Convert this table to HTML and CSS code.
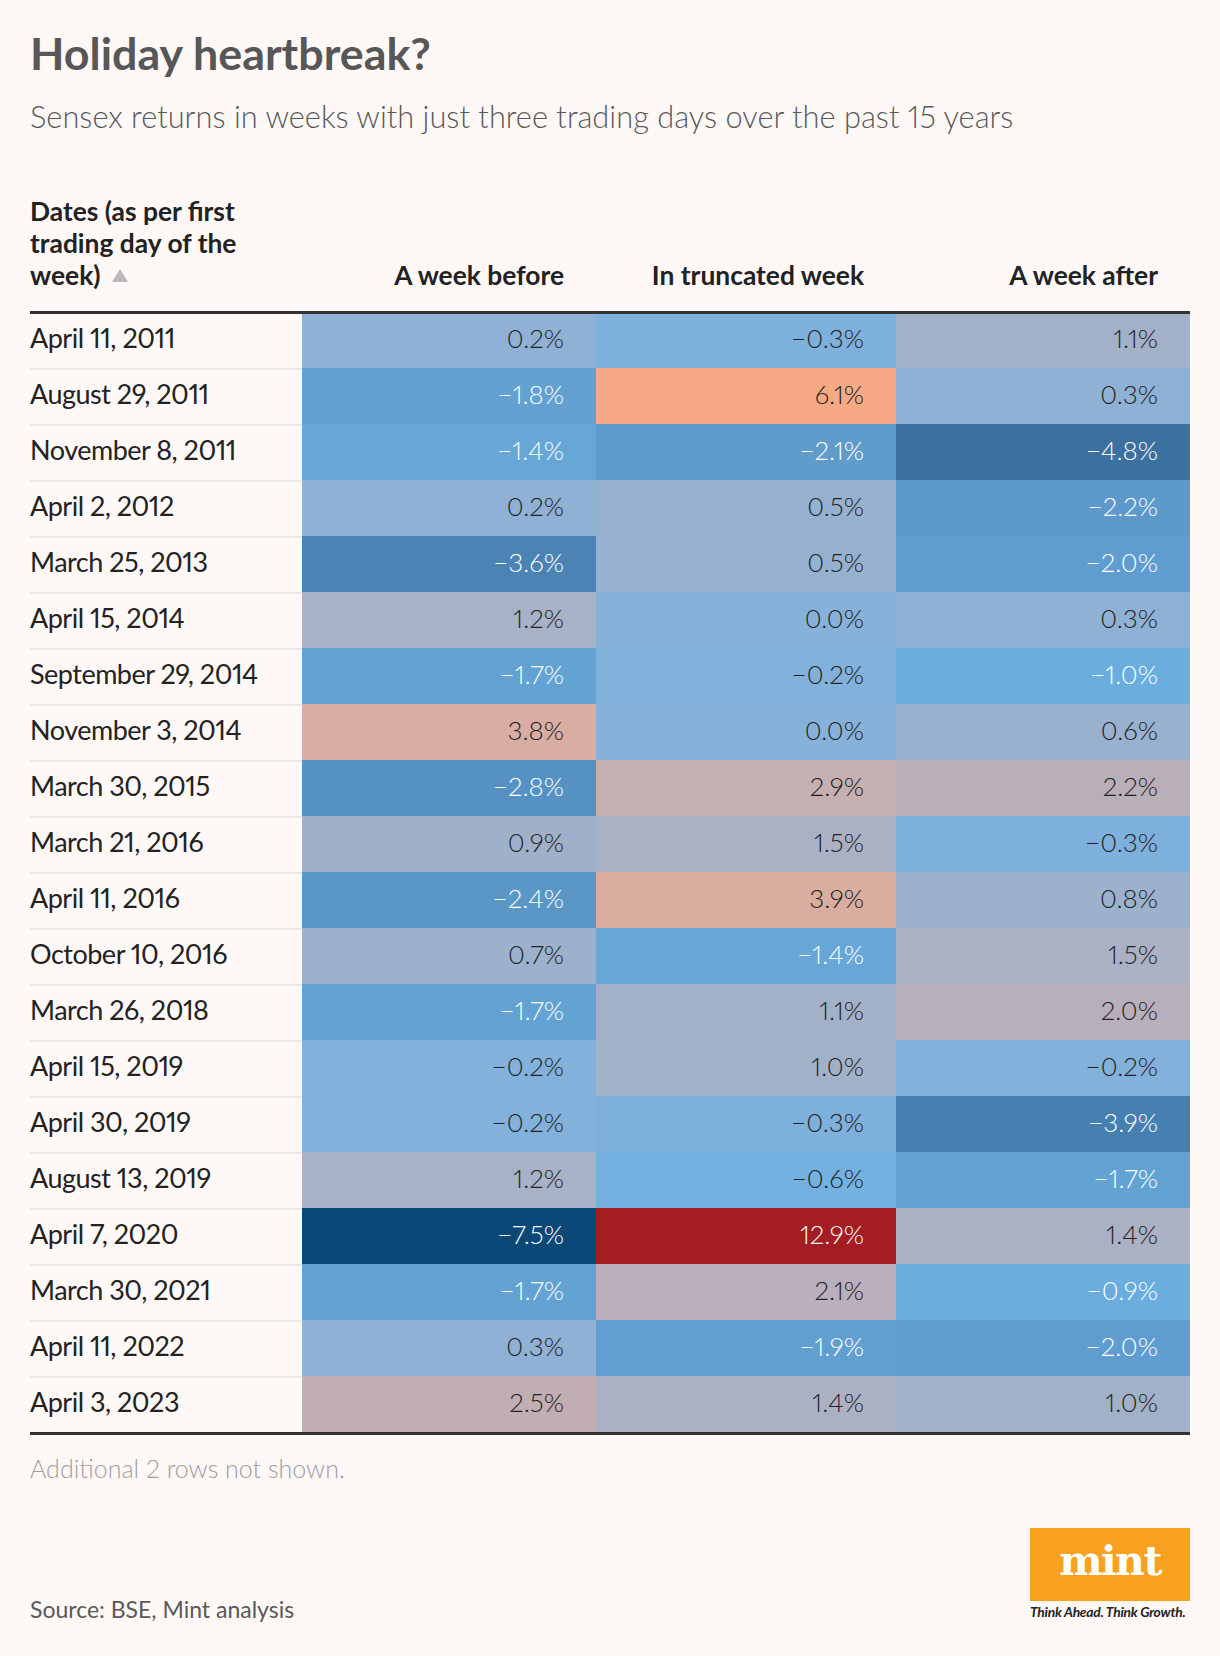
FILE: index.html
```html
<!DOCTYPE html>
<html lang="en">
<head>
<meta charset="utf-8">
<title>Holiday heartbreak?</title>
<link rel="stylesheet" href="styles.css">
</head>
<body>
<div class="page">
  <h1 class="title">Holiday heartbreak?</h1>
  <p class="subtitle">Sensex returns in weeks with just three trading days over the past 15 years</p>

  <div class="table">
    <div class="thead">
      <div class="th th-date">Dates (as per first<br>trading day of the<br>week)<svg class="sort" width="16" height="13" viewBox="0 0 16 13"><path d="M8 0 L16 13 L0 13 Z"/></svg></div>
      <div class="th th-num">A week before</div>
      <div class="th th-num">In truncated week</div>
      <div class="th th-num">A week after</div>
    </div>
    <div class="tbody">
      <div class="row"><div class="date">April 11, 2011</div><div class="cell" style="background:#8fb1d6">0.2%</div><div class="cell" style="background:#7db0dc">−0.3%</div><div class="cell" style="background:#a2b1c8">1.1%</div></div>
      <div class="row"><div class="date">August 29, 2011</div><div class="cell inv" style="background:#62a1d1">−1.8%</div><div class="cell" style="background:#f7a985">6.1%</div><div class="cell" style="background:#8fb1d6">0.3%</div></div>
      <div class="row"><div class="date">November 8, 2011</div><div class="cell inv" style="background:#67a7d8">−1.4%</div><div class="cell inv" style="background:#5f9ccc">−2.1%</div><div class="cell inv" style="background:#3a71a1">−4.8%</div></div>
      <div class="row"><div class="date">April 2, 2012</div><div class="cell" style="background:#8fb1d6">0.2%</div><div class="cell" style="background:#96b1cf">0.5%</div><div class="cell inv" style="background:#5d99ca">−2.2%</div></div>
      <div class="row"><div class="date">March 25, 2013</div><div class="cell inv" style="background:#4a83b4">−3.6%</div><div class="cell" style="background:#96b1cf">0.5%</div><div class="cell inv" style="background:#5f9ccf">−2.0%</div></div>
      <div class="row"><div class="date">April 15, 2014</div><div class="cell" style="background:#a7b1c8">1.2%</div><div class="cell" style="background:#86b1d9">0.0%</div><div class="cell" style="background:#8fb1d6">0.3%</div></div>
      <div class="row"><div class="date">September 29, 2014</div><div class="cell inv" style="background:#63a3d3">−1.7%</div><div class="cell" style="background:#82b1db">−0.2%</div><div class="cell inv" style="background:#6aaee0">−1.0%</div></div>
      <div class="row"><div class="date">November 3, 2014</div><div class="cell" style="background:#d8ada2">3.8%</div><div class="cell" style="background:#86b1d9">0.0%</div><div class="cell" style="background:#97b1cf">0.6%</div></div>
      <div class="row"><div class="date">March 30, 2015</div><div class="cell inv" style="background:#5592c3">−2.8%</div><div class="cell" style="background:#c6afb0">2.9%</div><div class="cell" style="background:#b9afb9">2.2%</div></div>
      <div class="row"><div class="date">March 21, 2016</div><div class="cell" style="background:#9fb1ca">0.9%</div><div class="cell" style="background:#aab1c5">1.5%</div><div class="cell" style="background:#7db0dc">−0.3%</div></div>
      <div class="row"><div class="date">April 11, 2016</div><div class="cell inv" style="background:#5a97c7">−2.4%</div><div class="cell" style="background:#d9ada0">3.9%</div><div class="cell" style="background:#9cb1cc">0.8%</div></div>
      <div class="row"><div class="date">October 10, 2016</div><div class="cell" style="background:#9cb1cc">0.7%</div><div class="cell inv" style="background:#67a7d8">−1.4%</div><div class="cell" style="background:#aab1c5">1.5%</div></div>
      <div class="row"><div class="date">March 26, 2018</div><div class="cell inv" style="background:#63a3d3">−1.7%</div><div class="cell" style="background:#a2b1c8">1.1%</div><div class="cell" style="background:#b7afbc">2.0%</div></div>
      <div class="row"><div class="date">April 15, 2019</div><div class="cell" style="background:#82b1db">−0.2%</div><div class="cell" style="background:#a1b1c8">1.0%</div><div class="cell" style="background:#82b1db">−0.2%</div></div>
      <div class="row"><div class="date">April 30, 2019</div><div class="cell" style="background:#82b1db">−0.2%</div><div class="cell" style="background:#7db0dc">−0.3%</div><div class="cell inv" style="background:#4580b0">−3.9%</div></div>
      <div class="row"><div class="date">August 13, 2019</div><div class="cell" style="background:#a7b1c8">1.2%</div><div class="cell" style="background:#73b1e1">−0.6%</div><div class="cell inv" style="background:#63a3d3">−1.7%</div></div>
      <div class="row"><div class="date">April 7, 2020</div><div class="cell inv" style="background:#0b4877">−7.5%</div><div class="cell inv" style="background:#a41d22">12.9%</div><div class="cell" style="background:#aab1c5">1.4%</div></div>
      <div class="row"><div class="date">March 30, 2021</div><div class="cell inv" style="background:#63a3d3">−1.7%</div><div class="cell" style="background:#bab0bd">2.1%</div><div class="cell inv" style="background:#6aaee0">−0.9%</div></div>
      <div class="row"><div class="date">April 11, 2022</div><div class="cell" style="background:#8fb1d6">0.3%</div><div class="cell inv" style="background:#609fd0">−1.9%</div><div class="cell inv" style="background:#5f9ccf">−2.0%</div></div>
      <div class="row"><div class="date">April 3, 2023</div><div class="cell" style="background:#c0aeb4">2.5%</div><div class="cell" style="background:#aab1c5">1.4%</div><div class="cell" style="background:#a1b1c8">1.0%</div></div>
    </div>
  </div>

  <p class="note">Additional 2 rows not shown.</p>

  <footer class="footer">
    <span class="source">Source: BSE, Mint analysis</span>
    <div class="logo">
      <div class="logo-box">mint</div>
      <div class="tagline">Think Ahead. Think Growth.</div>
    </div>
  </footer>
</div>
</body>
</html>
```
FILE: styles.css
```css
html, body {
  margin: 0;
  padding: 0;
  background: #fef8f7;
}

body {
  font-family: Lato, "Noto Sans", sans-serif;
  color: #222;
  font-variant-numeric: proportional-nums;
}

.page {
  padding: 27px 30px 0;
  height: 1656px;
  box-sizing: border-box;
}

.title {
  margin: 0;
  font-size: 44.8px;
  line-height: 53px;
  font-weight: 700;
  color: #575757;
}

.subtitle {
  margin: 19px 0 0;
  font-size: 30.8px;
  line-height: 36px;
  font-weight: 300;
  color: #58585a;
}

/* table */
.table {
  margin-top: 60px;
  width: 1160px;
}

.thead,
.row {
  display: grid;
  grid-template-columns: 272px 294px 300px 294px;
}

.thead {
  align-items: end;
  padding-bottom: 20px;
  border-bottom: 3px solid #333;
}

.th {
  font-size: 26.4px;
  line-height: 32px;
  font-weight: 700;
  color: #222;
}

.th-num {
  text-align: right;
  padding-right: 32px;
}

.sort {
  fill: #bdb8b8;
  margin-left: 11px;
  vertical-align: 3px;
}

.tbody {
  border-bottom: 3px solid #333;
}

.row {
  height: 56px;
  box-sizing: border-box;
  border-top: 2px solid rgba(0, 0, 0, 0.065);
}

.row:first-child {
  height: 54px;
  border-top: none;
}

.date {
  padding-top: 8px;
  font-size: 27px;
  line-height: 32px;
  font-weight: 400;
  letter-spacing: -0.5px;
  color: #222;
  white-space: nowrap;
}

.cell {
  margin-top: -2px;
  padding: 10px 32px 0 0;
  text-align: right;
  font-size: 26px;
  line-height: 32px;
  font-weight: 300;
  color: #222;
}

.row:first-child .cell {
  margin-top: 0;
  padding-top: 8px;
}

.cell.inv {
  color: #fff;
}

/* footnotes */
.note {
  margin: 18px 0 0;
  font-size: 25px;
  line-height: 30px;
  font-weight: 300;
  color: #a19d9d;
}

.footer {
  margin-top: 45px;
  display: flex;
  justify-content: space-between;
  align-items: flex-end;
}

.source {
  font-size: 23px;
  line-height: 28px;
  font-weight: 400;
  color: #595959;
  margin-bottom: -3px;
}

.logo {
  width: 160px;
  display: flex;
  flex-direction: column;
  align-items: stretch;
}

.logo-box {
  height: 73px;
  background: #f8a01f;
  color: #fff;
  font-family: "DejaVu Serif", serif;
  font-weight: 700;
  font-size: 41px;
  line-height: 66px;
  letter-spacing: -1.5px;
  text-align: center;
}

.tagline {
  margin-top: 3px;
  font-size: 13.8px;
  line-height: 16px;
  font-style: italic;
  font-weight: 700;
  color: #222;
  white-space: nowrap;
  letter-spacing: -0.25px;
}
```
